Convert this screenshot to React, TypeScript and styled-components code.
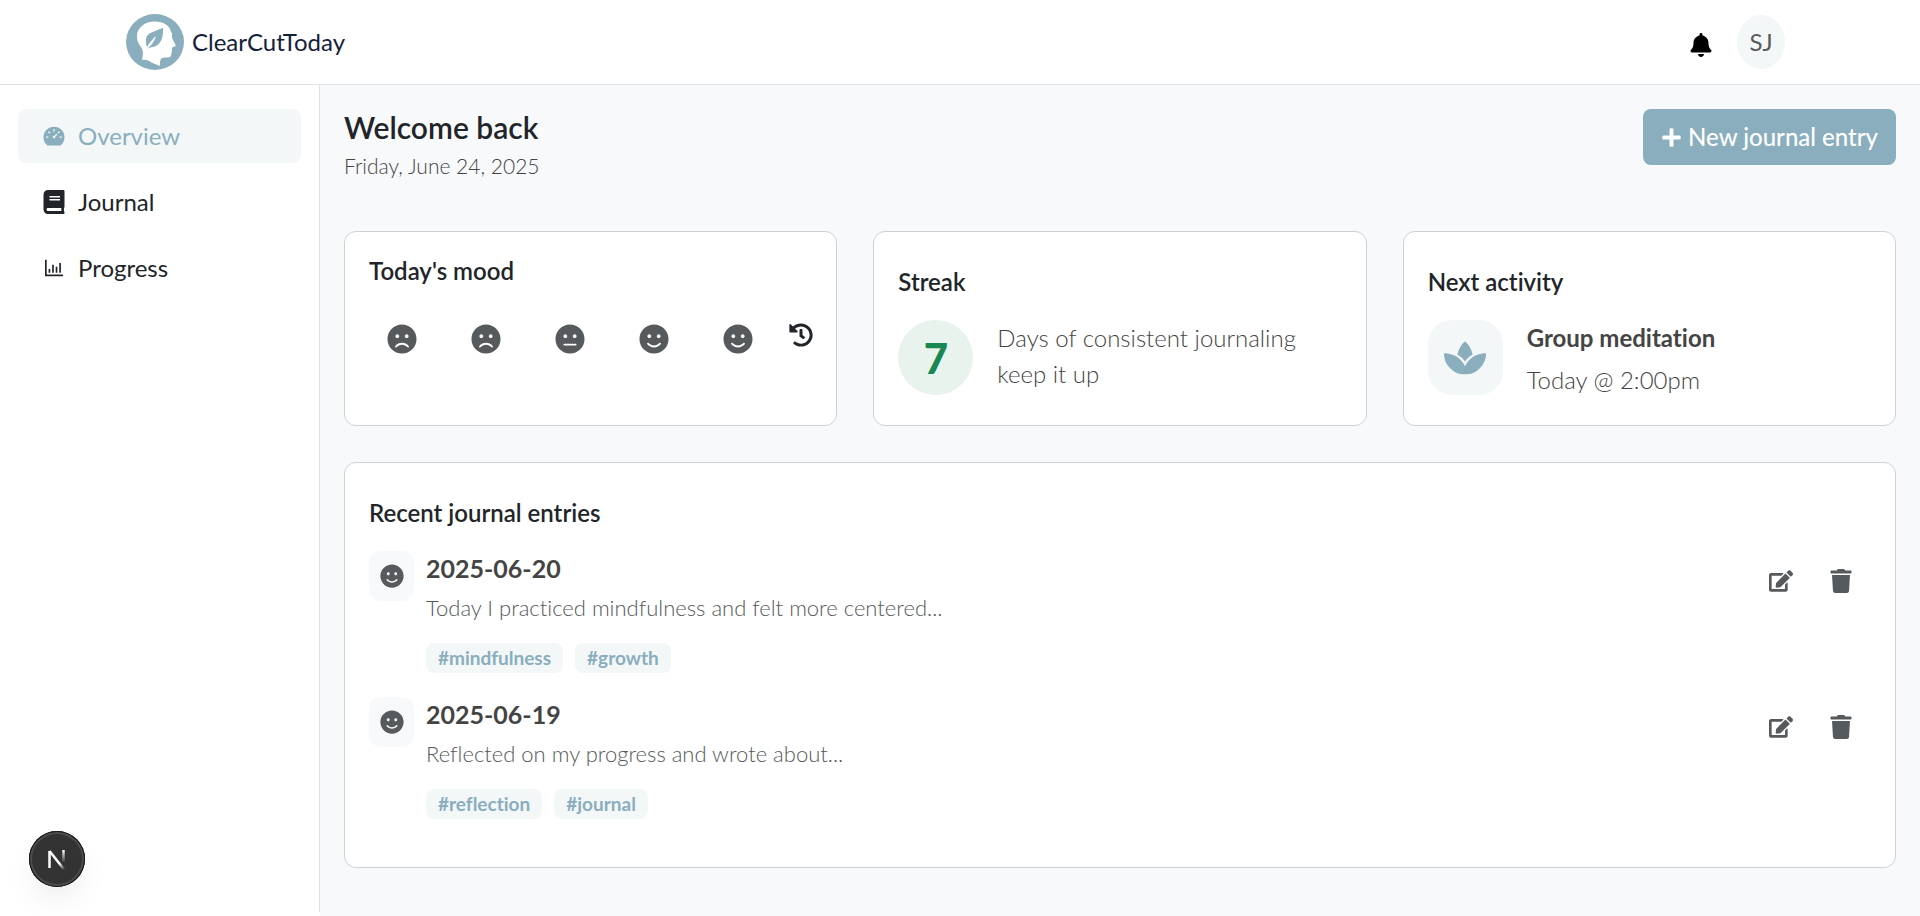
import React from 'react';
import styled, { createGlobalStyle } from 'styled-components';
import {
  FaBell,
  FaBook,
  FaEdit,
  FaFrown,
  FaHistory,
  FaMeh,
  FaPlus,
  FaSmile,
  FaSpa,
  FaTrash,
} from 'react-icons/fa';
import { AiFillDashboard, AiOutlineBarChart } from 'react-icons/ai';

const color = {
  accent: '#8aaebd',
  accentSoft: '#f3f7f8',
  page: '#f8f9fb',
  ink: '#212529',
  text: '#444444',
  muted: '#565a5c',
  line: '#dee2e6',
  cardLine: '#cfd1d3',
  green: '#198754',
  greenSoft: '#e8f3ed',
};

const GlobalStyle = createGlobalStyle`
  *, *::before, *::after { box-sizing: border-box; }
  body {
    margin: 0;
    background: #fff;
    color: ${color.ink};
    font-family: Lato, "Liberation Sans", sans-serif;
    font-size: 24px;
    font-variant-ligatures: no-common-ligatures;
    line-height: 36px;
  }
  h1, h2, h3, p, ul { margin: 0; padding: 0; }
  ul { list-style: none; }
  button { border: 0; background: none; padding: 0; font: inherit; color: inherit; cursor: pointer; }
  a { color: inherit; text-decoration: none; }
  svg { display: block; flex-shrink: 0; }
`;

const Page = styled.div`
  display: flex;
  flex-direction: column;
  min-height: 100vh;
`;

const Header = styled.header`
  border-bottom: 1px solid ${color.line};
  background: #fff;
`;

const HeaderInner = styled.div`
  display: flex;
  align-items: center;
  justify-content: space-between;
  max-width: 1680px;
  height: 84px;
  margin: 0 auto;
  padding: 0 15px 0 6px;
`;

const Brand = styled.a`
  display: flex;
  align-items: center;
  gap: 8px;
  color: #14203a;
`;

const HeaderActions = styled.div`
  display: flex;
  align-items: center;
  gap: 24px;
`;

const BellButton = styled.button`
  padding-top: 6px;
  color: #000;
`;

const Avatar = styled.button`
  width: 48px;
  height: 54px;
  border-radius: 50%;
  background: ${color.accentSoft};
  color: ${color.muted};
`;

const Body = styled.div`
  display: flex;
  flex: 1;
`;

const Sidebar = styled.nav`
  flex: 0 0 320px;
  margin-bottom: 4px;
  padding: 24px 18px;
  border-right: 1px solid ${color.line};
  background: #fff;
`;

const NavList = styled.ul`
  display: flex;
  flex-direction: column;
  gap: 12px;
`;

const NavLink = styled.a<{ $active?: boolean }>`
  display: flex;
  align-items: center;
  gap: 12px;
  padding: 9px 24px;
  border-radius: 8px;
  background: ${(p) => (p.$active ? color.accentSoft : 'transparent')};

  && { color: ${(p) => (p.$active ? color.accent : color.ink)}; }
`;

const Main = styled.main`
  flex: 1;
  min-width: 0;
  padding: 24px;
  background: ${color.page};
`;

const TopRow = styled.div`
  display: flex;
  align-items: flex-start;
  justify-content: space-between;
  margin-bottom: 47px;
`;

const Title = styled.h1`
  margin-bottom: 3px;
  font-size: 30px;
  font-weight: 600;
  line-height: 36px;
`;

const DateLine = styled.p`
  color: ${color.text};
  font-size: 21px;
  font-weight: 300;
`;

const PrimaryButton = styled.button`
  display: flex;
  align-items: center;
  gap: 6px;
  height: 56px;
  padding: 0 18px;
  border-radius: 8px;
  background: ${color.accent};
  color: #fff;
  font-weight: 500;
`;

const CardGrid = styled.div`
  display: grid;
  grid-template-columns: repeat(3, minmax(0, 1fr));
  gap: 36px;
  margin-bottom: 36px;
`;

const Card = styled.section<{ $compact?: boolean }>`
  padding: ${(p) => (p.$compact ? 24 : 35)}px 24px 27px;
  border: 1px solid ${color.cardLine};
  border-radius: 12px;
  background: #fff;
`;

const JournalCard = styled(Card)`
  padding-bottom: 48px;
`;

const CardTitle = styled.h2`
  margin-bottom: 24px;
  font-size: 24px;
  font-weight: 600;
  line-height: 29px;
`;

const MoodRow = styled.div`
  display: flex;
  align-items: flex-start;
  gap: 18px;
`;

const MoodButton = styled.button`
  padding: 15px 18px;
  color: ${color.muted};
  font-size: 30px;
`;

const HistoryButton = styled.button`
  padding-top: 14px;
`;

const CardBody = styled.div`
  display: flex;
  gap: 24px;
`;

const Badge = styled.div<{ $round?: boolean }>`
  display: flex;
  align-items: center;
  justify-content: center;
  flex: 0 0 75px;
  height: 75px;
  border-radius: ${(p) => (p.$round ? '50%' : '24px')};
  background: ${(p) => (p.$round ? color.greenSoft : color.accentSoft)};
  color: ${(p) => (p.$round ? color.green : color.accent)};
  font-size: 42px;
  font-weight: 900;
`;

const CardText = styled.p`
  color: ${color.text};
  font-weight: 300;
`;

const ActivityName = styled.h3`
  margin-bottom: 6px;
  color: ${color.text};
  font-size: 24px;
  font-weight: 700;
`;

const EntryList = styled.ul`
  display: flex;
  flex-direction: column;
  gap: 24px;
`;

const Entry = styled.li`
  display: flex;
  align-items: flex-start;
  gap: 12px;
`;

const EntryMood = styled.div`
  display: flex;
  align-items: center;
  justify-content: center;
  flex: 0 0 45px;
  height: 50px;
  border-radius: 12px;
  background: ${color.page};
  color: ${color.muted};
`;

const EntryContent = styled.div`
  flex: 1;
  line-height: 34px;
`;

const EntryDate = styled.h3`
  margin-bottom: 6px;
  color: ${color.text};
  font-size: 25px;
  font-weight: 700;
`;

const EntryText = styled.p`
  margin-bottom: 18px;
  color: ${color.muted};
  font-size: 22px;
  font-weight: 300;
`;

const Tags = styled.ul`
  display: flex;
  gap: 12px;
`;

const Tag = styled.li`
  padding: 0 12px;
  border-radius: 8px;
  background: ${color.accentSoft};
  color: ${color.accent};
  font-size: 19px;
  font-weight: 700;
  line-height: 30px;
`;

const EntryActions = styled.div`
  display: flex;
`;

const IconButton = styled.button`
  padding: 18px;
  color: ${color.muted};
`;

const DevButton = styled.button`
  position: fixed;
  left: 29px;
  bottom: 29px;
  display: flex;
  align-items: center;
  justify-content: center;
  width: 56px;
  height: 56px;
  border-radius: 50%;
  background: #333;
  box-shadow: inset 0 0 0 1px #171717, inset 0 0 0 3px #4c4c4c, 0 16px 32px -8px rgba(0, 0, 0, 0.1);
`;

function Logo() {
  return (
    <svg width="58" height="56" viewBox="378 43 175 169" preserveAspectRatio="none" aria-hidden="true">
      <ellipse cx="465.500" cy="127.500" rx="87.500" ry="84.500" fill={color.accent} />
      <path
        d="M465 66 C436 66 411 84 411 110 C411 126 418 136 426 146 C431 157 429 170 426 182 C432 181 440 181 447 184 C457 192 469 194 480 200 C480 192 480 184 484 177 C492 172 504 176 511 172 C517 168 513 161 517 156 C518 151 515 148 518 143 L527 140 C531 137 518 122 517 113 C516 103 520 104 514 97 C510 78 490 66 465 66 Z"
        fill="#fff"
      />
      <path
        d="M490 84 C490 106 488 125 474 136 C463 144 453 142 446 147 C438 144 436 122 440 112 C448 96 474 94 490 84 Z"
        fill={color.accent}
      />
      <path d="M441 148 C447 131 457 123 467 112 C462 126 455 136 441 148 Z" fill="#fff" stroke="#fff" strokeWidth="2" />
    </svg>
  );
}

function DevMark() {
  return (
    <svg width="20" height="24" viewBox="0 0 20 24" fill="none" aria-hidden="true">
      <defs>
        <linearGradient id="diag" x1="10" y1="12" x2="18" y2="22" gradientUnits="userSpaceOnUse">
          <stop offset="0.400" stopColor="#fff" />
          <stop offset="1" stopColor="#fff" stopOpacity="0" />
        </linearGradient>
        <linearGradient id="stem" x1="16" y1="3" x2="16" y2="16" gradientUnits="userSpaceOnUse">
          <stop stopColor="#fff" />
          <stop offset="1" stopColor="#fff" stopOpacity="0" />
        </linearGradient>
      </defs>
      <path d="M2.500 21 V4" stroke="#fff" strokeWidth="2.500" />
      <path d="M2.500 4 L17.500 23" stroke="url(#diag)" strokeWidth="2.500" />
      <path d="M16.500 3 V15" stroke="url(#stem)" strokeWidth="2.500" />
    </svg>
  );
}

const navItems = [
  { label: 'Overview', Icon: AiFillDashboard, active: true },
  { label: 'Journal', Icon: FaBook },
  { label: 'Progress', Icon: AiOutlineBarChart },
];

const moods = [
  { label: 'Very sad', Icon: FaFrown },
  { label: 'Sad', Icon: FaFrown },
  { label: 'Neutral', Icon: FaMeh },
  { label: 'Happy', Icon: FaSmile },
  { label: 'Very happy', Icon: FaSmile },
];

const entries = [
  {
    date: '2025-06-20',
    text: 'Today I practiced mindfulness and felt more centered...',
    tags: ['#mindfulness', '#growth'],
  },
  {
    date: '2025-06-19',
    text: 'Reflected on my progress and wrote about...',
    tags: ['#reflection', '#journal'],
  },
];

export default function App() {
  return (
    <Page>
      <GlobalStyle />
      <Header>
        <HeaderInner>
          <Brand href="#">
            <Logo />
            ClearCutToday
          </Brand>
          <HeaderActions>
            <BellButton aria-label="Notifications">
              <FaBell />
            </BellButton>
            <Avatar>SJ</Avatar>
          </HeaderActions>
        </HeaderInner>
      </Header>

      <Body>
        <Sidebar>
          <NavList>
            {navItems.map(({ label, Icon, active }) => (
              <li key={label}>
                <NavLink href="#" $active={active}>
                  <Icon />
                  {label}
                </NavLink>
              </li>
            ))}
          </NavList>
        </Sidebar>

        <Main>
          <TopRow>
            <div>
              <Title>Welcome back</Title>
              <DateLine>Friday, June 24, 2025</DateLine>
            </div>
            <PrimaryButton>
              <FaPlus size={21} />
              New journal entry
            </PrimaryButton>
          </TopRow>

          <CardGrid>
            <Card $compact>
              <CardTitle>Today's mood</CardTitle>
              <MoodRow>
                {moods.map(({ label, Icon }) => (
                  <MoodButton key={label} aria-label={label}>
                    <Icon />
                  </MoodButton>
                ))}
                <HistoryButton aria-label="Mood history">
                  <FaHistory />
                </HistoryButton>
              </MoodRow>
            </Card>

            <Card>
              <CardTitle>Streak</CardTitle>
              <CardBody>
                <Badge $round>7</Badge>
                <CardText>
                  Days of consistent journaling
                  <br />
                  keep it up
                </CardText>
              </CardBody>
            </Card>

            <Card>
              <CardTitle>Next activity</CardTitle>
              <CardBody>
                <Badge>
                  <FaSpa />
                </Badge>
                <div>
                  <ActivityName>Group meditation</ActivityName>
                  <CardText>Today @ 2:00pm</CardText>
                </div>
              </CardBody>
            </Card>
          </CardGrid>

          <JournalCard>
            <CardTitle>Recent journal entries</CardTitle>
            <EntryList>
              {entries.map((entry) => (
                <Entry key={entry.date}>
                  <EntryMood>
                    <FaSmile />
                  </EntryMood>
                  <EntryContent>
                    <EntryDate>{entry.date}</EntryDate>
                    <EntryText>{entry.text}</EntryText>
                    <Tags>
                      {entry.tags.map((tag) => (
                        <Tag key={tag}>{tag}</Tag>
                      ))}
                    </Tags>
                  </EntryContent>
                  <EntryActions>
                    <IconButton aria-label={`Edit entry ${entry.date}`}>
                      <FaEdit />
                    </IconButton>
                    <IconButton aria-label={`Delete entry ${entry.date}`}>
                      <FaTrash />
                    </IconButton>
                  </EntryActions>
                </Entry>
              ))}
            </EntryList>
          </JournalCard>
        </Main>
      </Body>

      <DevButton aria-label="Open developer tools">
        <DevMark />
      </DevButton>
    </Page>
  );
}
